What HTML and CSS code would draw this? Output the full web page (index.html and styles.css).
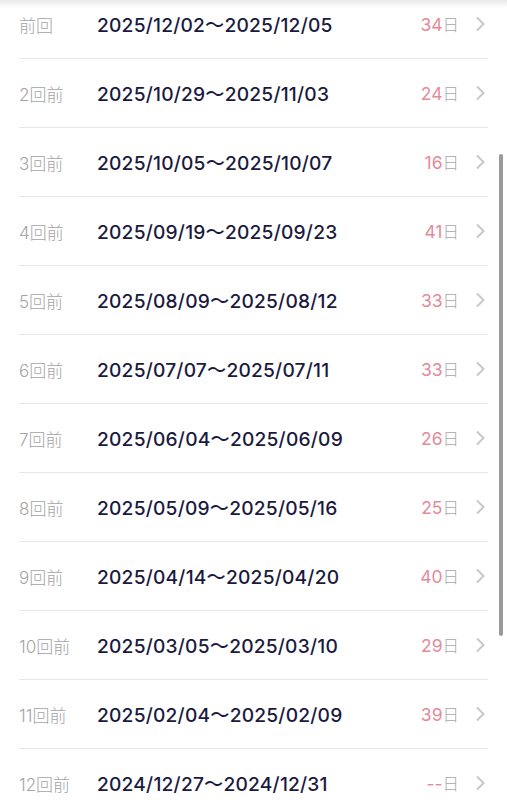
FILE: index.html
```html
<!DOCTYPE html>
<html lang="ja">
<head>
    <meta charset="UTF-8">
    <meta name="viewport" content="width=device-width, initial-scale=1.0">
    <title>生理の履歴</title>
    <link rel="stylesheet" href="styles.css">
</head>
<body>

<div class="top-shade"></div>

<ul class="history-list">
    <li class="history-row">
        <span class="row-label">前回</span>
        <span class="row-date">2025/12/02～2025/12/05</span>
        <span class="row-days"><b>34</b>日</span>
        <svg class="row-arrow" viewBox="0 0 12 16"><path d="M3 1.5l6.5 6.5-6.5 6.5"/></svg>
    </li>
    <li class="history-row">
        <span class="row-label">2回前</span>
        <span class="row-date">2025/10/29～2025/11/03</span>
        <span class="row-days"><b>24</b>日</span>
        <svg class="row-arrow" viewBox="0 0 12 16"><path d="M3 1.5l6.5 6.5-6.5 6.5"/></svg>
    </li>
    <li class="history-row">
        <span class="row-label">3回前</span>
        <span class="row-date">2025/10/05～2025/10/07</span>
        <span class="row-days"><b>16</b>日</span>
        <svg class="row-arrow" viewBox="0 0 12 16"><path d="M3 1.5l6.5 6.5-6.5 6.5"/></svg>
    </li>
    <li class="history-row">
        <span class="row-label">4回前</span>
        <span class="row-date">2025/09/19～2025/09/23</span>
        <span class="row-days"><b>41</b>日</span>
        <svg class="row-arrow" viewBox="0 0 12 16"><path d="M3 1.5l6.5 6.5-6.5 6.5"/></svg>
    </li>
    <li class="history-row">
        <span class="row-label">5回前</span>
        <span class="row-date">2025/08/09～2025/08/12</span>
        <span class="row-days"><b>33</b>日</span>
        <svg class="row-arrow" viewBox="0 0 12 16"><path d="M3 1.5l6.5 6.5-6.5 6.5"/></svg>
    </li>
    <li class="history-row">
        <span class="row-label">6回前</span>
        <span class="row-date">2025/07/07～2025/07/11</span>
        <span class="row-days"><b>33</b>日</span>
        <svg class="row-arrow" viewBox="0 0 12 16"><path d="M3 1.5l6.5 6.5-6.5 6.5"/></svg>
    </li>
    <li class="history-row">
        <span class="row-label">7回前</span>
        <span class="row-date">2025/06/04～2025/06/09</span>
        <span class="row-days"><b>26</b>日</span>
        <svg class="row-arrow" viewBox="0 0 12 16"><path d="M3 1.5l6.5 6.5-6.5 6.5"/></svg>
    </li>
    <li class="history-row">
        <span class="row-label">8回前</span>
        <span class="row-date">2025/05/09～2025/05/16</span>
        <span class="row-days"><b>25</b>日</span>
        <svg class="row-arrow" viewBox="0 0 12 16"><path d="M3 1.5l6.5 6.5-6.5 6.5"/></svg>
    </li>
    <li class="history-row">
        <span class="row-label">9回前</span>
        <span class="row-date">2025/04/14～2025/04/20</span>
        <span class="row-days"><b>40</b>日</span>
        <svg class="row-arrow" viewBox="0 0 12 16"><path d="M3 1.5l6.5 6.5-6.5 6.5"/></svg>
    </li>
    <li class="history-row">
        <span class="row-label">10回前</span>
        <span class="row-date">2025/03/05～2025/03/10</span>
        <span class="row-days"><b>29</b>日</span>
        <svg class="row-arrow" viewBox="0 0 12 16"><path d="M3 1.5l6.5 6.5-6.5 6.5"/></svg>
    </li>
    <li class="history-row">
        <span class="row-label">11回前</span>
        <span class="row-date">2025/02/04～2025/02/09</span>
        <span class="row-days"><b>39</b>日</span>
        <svg class="row-arrow" viewBox="0 0 12 16"><path d="M3 1.5l6.5 6.5-6.5 6.5"/></svg>
    </li>
    <li class="history-row">
        <span class="row-label">12回前</span>
        <span class="row-date">2024/12/27～2024/12/31</span>
        <span class="row-days"><b>--</b>日</span>
        <svg class="row-arrow" viewBox="0 0 12 16"><path d="M3 1.5l6.5 6.5-6.5 6.5"/></svg>
    </li>
</ul>

<div class="scroll-thumb"></div>

</body>
</html>
```

FILE: styles.css
```css
body {
    margin: 0;
    background: #fff;
    font-family: 'Inter', 'Noto Sans CJK JP', sans-serif;
    height: 800px;
    overflow: hidden;
}
.top-shade {
    position: absolute;
    top: 0;
    left: 0;
    right: 0;
    height: 8px;
    background: linear-gradient(to bottom, rgba(0, 0, 0, 0.09), rgba(0, 0, 0, 0));
    z-index: 2;
}
.history-list {
    list-style: none;
    margin: -10px 19px 0;
    padding: 0;
}
.history-row {
    display: flex;
    align-items: center;
    height: 68px;
    border-bottom: 1px solid #e6e6e6;
}
.row-label {
    width: 78px;
    font-size: 17px;
    font-weight: 300;
    color: #a4a4a4;
}
.row-date {
    flex: 1;
    font-size: 19.2px;
    font-weight: 500;
    color: #1b1a3e;
    letter-spacing: 0.2px;
}
.row-days {
    font-size: 16.5px;
    color: #a8a8a8;
    font-weight: 300;
}
.row-days b {
    font-weight: 400;
    color: #e48b9c;
    font-size: 17.5px;
}
.row-arrow {
    width: 12px;
    height: 16px;
    margin-left: 15px;
    margin-right: 2px;
    fill: none;
    stroke: #c8c8c8;
    stroke-width: 2;
}
.scroll-thumb {
    position: absolute;
    left: 499px;
    top: 154px;
    width: 4px;
    height: 482px;
    border-radius: 2px;
    background: #9a9a9a;
}
```
